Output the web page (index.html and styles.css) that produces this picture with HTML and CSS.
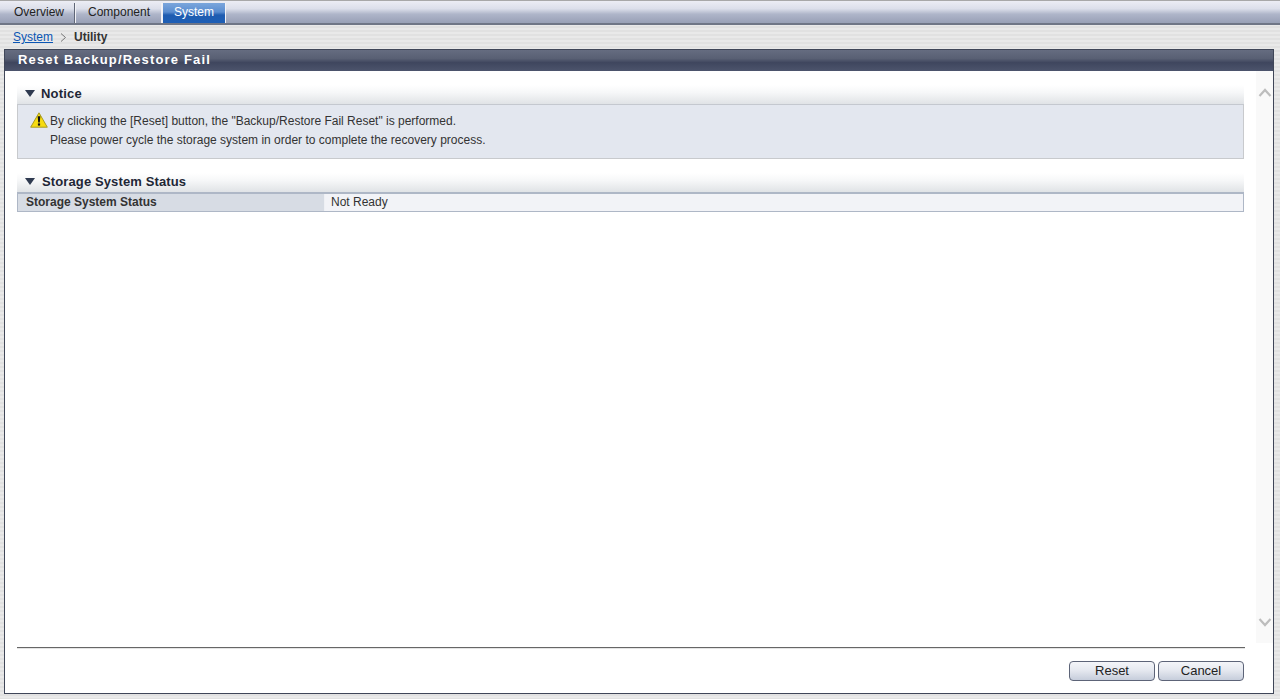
FILE: index.html
```html
<!DOCTYPE html>
<html lang="en">
<head>
<meta charset="utf-8">
<title>Reset Backup/Restore Fail</title>
<link rel="stylesheet" href="styles.css">
</head>
<body>
<nav class="tabs">
  <a class="tab tab-overview">Overview</a>
  <a class="tab tab-component">Component</a>
  <a class="tab tab-system">System</a>
</nav>
<div class="crumbs">
  <a class="crumb-link">System</a>
  <svg class="crumb-sep" width="7" height="9" viewBox="0 0 7 9"><path d="M1 .5 5.5 4.5 1 8.5" fill="none" stroke="#777" stroke-width="1"/></svg>
  <span class="crumb-current">Utility</span>
</div>
<main class="panel">
  <h1 class="panel-title">Reset Backup/Restore Fail</h1>
  <div class="panel-body">
    <div class="content">
      <section class="notice-section">
        <h2 class="section-head"><span class="arrow"></span><span class="head-notice">Notice</span></h2>
        <div class="notice">
          <p class="notice-line">
            <svg class="warn" width="18" height="16" viewBox="0 0 18 16"><path d="M9 .8 17.3 15.2H.7Z" fill="#f7dc10" stroke="#a89a20" stroke-width="1" stroke-linejoin="round"/><path d="M7.7 4.3h2.6L9.8 10.5H8.2Z" fill="#111"/><rect x="7.9" y="11.4" width="2.2" height="2.2" fill="#111"/></svg>
            By clicking the [Reset] button, the "Backup/Restore Fail Reset" is performed.
          </p>
          <p class="notice-line notice-indent">Please power cycle the storage system in order to complete the recovery process.</p>
        </div>
      </section>
      <section class="status-section">
        <h2 class="section-head"><span class="arrow"></span><span class="head-status">Storage System Status</span></h2>
        <div class="status-row">
          <div class="status-label">Storage System Status</div>
          <div class="status-value">Not Ready</div>
        </div>
      </section>
    </div>
    <div class="scroller">
      <svg width="14" height="9" viewBox="0 0 14 9"><path d="M1.5 8 7 2 12.5 8" fill="none" stroke="#bdbdbd" stroke-width="2.2"/></svg>
      <svg width="14" height="9" viewBox="0 0 14 9"><path d="M1.5 1 7 7 12.5 1" fill="none" stroke="#bdbdbd" stroke-width="2.2"/></svg>
    </div>
  </div>
  <footer class="actions">
    <button class="btn">Reset</button>
    <button class="btn">Cancel</button>
  </footer>
</main>
</body>
</html>
```
FILE: styles.css
```css
* { box-sizing: border-box; }
html, body { margin: 0; height: 699px; overflow: hidden; }
body {
  font-family: "Liberation Sans", Arial, sans-serif;
  font-size: 12px;
  color: #222;
  background: repeating-linear-gradient(180deg, #e9e9e9 0, #e9e9e9 2px, #e1e1e1 2px, #e1e1e1 4px);
  display: flex;
  flex-direction: column;
}
.tabs {
  height: 25px;
  flex: none;
  display: flex;
  padding: 2px 0 0 3px;
  border-top: 1px solid #a8a8a8;
  border-bottom: 2px solid #6f7686;
  background: linear-gradient(180deg, #ecedf4 0, #dcdfea 35%, #aeb5c9 60%, #98a0b6 100%);
}
.tab {
  height: 20px;
  line-height: 19px;
  text-align: center;
  color: #222;
  border-right: 1px solid #f2f2f6;
}
.tab-overview { width: 72px; padding-left: 1px; border-right: 1px solid #5f6677; box-shadow: 1px 0 0 #f2f2f6; }
.tab-component { width: 86px; margin-left: 1px; padding-left: 1px; }
.tab-system {
  width: 64px;
  color: #fff;
  background: linear-gradient(180deg, #7ba6dc 0, #5a8dd0 45%, #1f5cb0 60%, #1d5fb6 100%);
  border-left: 1px solid #f2f2f6;
}
.crumbs {
  height: 24px;
  flex: none;
  display: flex;
  align-items: center;
  padding-left: 13px;
}
.crumb-link { color: #0b56b4; text-decoration: underline; }
.crumb-sep { margin: 1px 7px 0 7px; }
.crumb-current { font-weight: bold; color: #333; }
.panel {
  height: 645px;
  flex: none;
  margin: 0 6px 0 4px;
  display: flex;
  flex-direction: column;
  background: #fff;
  border: 1px solid #3f4658;
}
.panel-title {
  margin: 0;
  height: 21px;
  flex: none;
  padding-left: 13px;
  font-size: 13px;
  line-height: 20px;
  font-weight: bold;
  letter-spacing: 1.16px;
  color: #fff;
  background: linear-gradient(180deg, #656c80 0, #596074 40%, #3f465e 60%, #4c546c 100%);
}
.panel-body {
  height: 572px;
  flex: none;
  display: flex;
  justify-content: space-between;
  margin-left: 12px;
}
.content { width: 1227px; }
.notice-section { padding-top: 14px; }
.section-head {
  margin: 0;
  height: 19px;
  display: flex;
  align-items: center;
  padding: 0 0 2px 8px;
  font-size: 13px;
  font-weight: bold;
  color: #1f2736;
  background: linear-gradient(180deg, #fff 0, #f6f7f8 40%, #e0e3e6 100%);
}
.head-notice { margin-left: -1px; letter-spacing: .2px; }
.head-status { letter-spacing: .12px; }
.arrow {
  width: 0;
  height: 0;
  margin-right: 7px;
  border-left: 5px solid transparent;
  border-right: 5px solid transparent;
  border-top: 7px solid #2f3a50;
}
.notice {
  height: 55px;
  padding: 7px 0 0 12px;
  background: #e3e7ef;
  border: 1px solid #c8cacd;
  border-top: 1px solid #c4c8cf;
}
.notice-line {
  margin: 0;
  height: 19px;
  line-height: 17px;
  display: flex;
  align-items: center;
  color: #333;
}
.warn { margin: 0 2px 3px 0; flex: none; }
.notice-indent { padding-left: 20px; }
.status-section { padding-top: 14px; }
.status-row {
  display: flex;
  height: 20px;
  border: 1px solid #aeb7c6;
  border-top-width: 2px;
  background: #f2f3f7;
}
.status-label {
  width: 307px;
  padding-left: 8px;
  line-height: 17px;
  font-weight: bold;
  color: #333;
  background: #d7dce4;
  border-right: 1px solid #eef0f4;
}
.status-value { padding-left: 6px; line-height: 17px; color: #333; }
.scroller {
  width: 17px;
  background: #f9f9f9;
  display: flex;
  flex-direction: column;
  justify-content: space-between;
  align-items: center;
  padding: 17px 0 16px;
}
.actions {
  height: 32px;
  margin: 4px 28px 0 12px;
  display: flex;
  justify-content: flex-end;
  align-items: flex-start;
  gap: 3px;
  padding: 13px 1px 0 0;
  border-top: 1px solid #666;
  box-shadow: inset 0 1px 0 #e4e4e4;
}
.btn {
  width: 86px;
  height: 20px;
  padding: 0 0 2px 0;
  font-family: inherit;
  font-size: 13px;
  color: #222;
  border: 1px solid #5d6478;
  border-radius: 4px;
  background: linear-gradient(180deg, #f4f5f9 0, #e6e9f0 45%, #c6cddb 100%);
}
```
